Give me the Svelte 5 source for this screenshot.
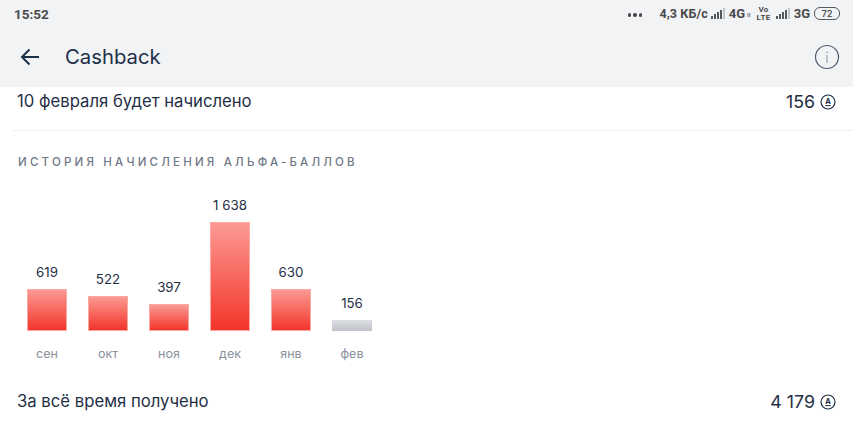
<script lang="ts">
  const months = [
    { label: 'сен', value: '619', height: 42 },
    { label: 'окт', value: '522', height: 35 },
    { label: 'ноя', value: '397', height: 27 },
    { label: 'дек', value: '1 638', height: 109 },
    { label: 'янв', value: '630', height: 42 },
    { label: 'фев', value: '156', height: 11, pending: true }
  ];
  const signalBars = [3, 5, 7, 9, 11];
</script>

{#snippet signal()}
  <svg class="signal" viewBox="0 0 15 11" width="15" height="11">
    {#each signalBars as h, i}
      <rect x={i * 3} y={11 - h} width="2" height={h} fill={i === 4 ? '#c4c6c9' : '#55585c'} />
    {/each}
  </svg>
{/snippet}

{#snippet points()}
  <svg class="points" viewBox="0 0 16 16" width="16" height="16">
    <circle cx="8" cy="8" r="7" fill="none" stroke="#1f2f45" stroke-width="1.2" />
    <text x="8" y="10" text-anchor="middle" font-size="7.5" font-weight="700" fill="#1f2f45">А</text>
    <line x1="5.2" y1="11.6" x2="10.8" y2="11.6" stroke="#1f2f45" stroke-width="1" />
  </svg>
{/snippet}

<div class="screen">
  <header class="top">
    <div class="status">
      <span class="time">15:52</span>
      <div class="status-right">
        <span class="dots"><i></i><i></i><i></i></span>
        <span class="speed">4,3 КБ/с</span>
        {@render signal()}
        <span class="net">4G</span>
        <span class="roam">ıı</span>
        <span class="volte"><span>Vo</span><span>LTE</span></span>
        {@render signal()}
        <span class="net">3G</span>
        <span class="battery">72</span>
      </div>
    </div>
    <div class="toolbar">
      <svg class="back" viewBox="0 0 20 18" width="20" height="18" fill="none" stroke="#1c2f48" stroke-width="2">
        <path d="M19 9H2M9.5 1.5L2 9l7.5 7.5" />
      </svg>
      <h1>Cashback</h1>
      <svg class="info" viewBox="0 0 26 26" width="26" height="26" fill="none">
        <circle cx="13" cy="13" r="11.5" stroke="#4a5a70" stroke-width="1.2" />
        <rect x="12.2" y="11" width="1.6" height="8" fill="#b0b5bc" />
        <rect x="12.2" y="7.5" width="1.6" height="1.8" fill="#b0b5bc" />
      </svg>
    </div>
  </header>

  <section class="row first">
    <span>10 февраля будет начислено</span>
    <span class="amount">156 {@render points()}</span>
  </section>
  <div class="divider"></div>

  <h2>История начисления Альфа-баллов</h2>

  <div class="chart">
    {#each months as m}
      <div class="col">
        <span class="value">{m.value}</span>
        <div class="bar" class:pending={m.pending} style="height: {m.height}px"></div>
        <span class="month">{m.label}</span>
      </div>
    {/each}
  </div>

  <section class="row last">
    <span>За всё время получено</span>
    <span class="amount">4 179 {@render points()}</span>
  </section>
</div>

<style>
  :global(body) {
    margin: 0;
    background: #fff;
  }

  .screen {
    width: 853px;
    height: 427px;
    overflow: hidden;
    font-family: Inter, Roboto, sans-serif;
    color: #1f2f45;
  }

  .top {
    background: #f2f3f5;
    height: 87px;
  }

  .status {
    height: 27px;
    display: flex;
    justify-content: space-between;
    align-items: center;
    padding: 0 13px 0 14px;
    color: #48494c;
    font-family: Roboto, sans-serif;
    font-weight: 700;
    font-size: 13px;
  }

  .time {
    font-size: 13.5px;
  }

  .status-right {
    display: flex;
    align-items: center;
    font-size: 12.5px;
  }

  .dots {
    display: flex;
    gap: 2px;
    margin: 3px 17px 0 0;
  }

  .dots i {
    width: 3.5px;
    height: 3.5px;
    border-radius: 50%;
    background: #48494c;
  }

  .speed {
    letter-spacing: 0.1px;
  }

  .signal {
    margin: 0 3px;
  }

  .net {
    font-size: 13px;
  }

  .roam {
    font-size: 7px;
    margin: 3px 0 0 2px;
    font-weight: 400;
  }

  .volte {
    display: flex;
    flex-direction: column;
    font-size: 8px;
    line-height: 8px;
    margin: 0 2px 0 6px;
    align-items: center;
    letter-spacing: 0.4px;
  }

  .battery {
    width: 24px;
    height: 11px;
    border: 1px solid #55585c;
    border-radius: 6px;
    margin-left: 4px;
    font-size: 9.5px;
    line-height: 11px;
    text-align: center;
    font-weight: 500;
  }

  .toolbar {
    height: 60px;
    display: flex;
    align-items: center;
    padding: 0 13px 0 20px;
  }

  .back {
    flex-shrink: 0;
  }

  h1 {
    flex: 1;
    margin: -1px 0 0 25px;
    font-size: 20.3px;
    font-weight: 400;
    color: #1c2f48;
  }

  .row {
    display: flex;
    justify-content: space-between;
    align-items: center;
    padding: 0 17px;
    font-size: 16.7px;
  }

  .first {
    height: 28px;
  }

  .amount {
    display: flex;
    align-items: center;
    gap: 5px;
    font-size: 17.8px;
  }

  .points {
    margin-top: 2px;
  }

  .divider {
    height: 1px;
    margin: 15px 0 0 13px;
    background: #eff0f2;
  }

  h2 {
    margin: 24px 0 0 18px;
    font-size: 11.5px;
    line-height: 14px;
    font-weight: 500;
    letter-spacing: 3.2px;
    text-transform: uppercase;
    color: #6f7885;
  }

  .chart {
    display: flex;
    align-items: flex-end;
    padding-left: 16.5px;
    height: 193px;
  }

  .col {
    width: 61px;
    display: flex;
    flex-direction: column;
    align-items: center;
  }

  .value {
    font-size: 13.3px;
    line-height: 16px;
    margin-bottom: 9px;
  }

  .bar {
    width: 40px;
    background: linear-gradient(#fb9a93, #f3352a);
    box-sizing: border-box;
    border: 1px solid #fcaaa5;
  }

  .bar.pending {
    background: linear-gradient(#dcdde1, #bfc2c9);
    border: none;
  }

  .month {
    font-size: 12.5px;
    line-height: 16px;
    margin-top: 15px;
    color: #8a919c;
  }

  .last {
    margin-top: 25px;
    height: 28px;
  }
</style>
